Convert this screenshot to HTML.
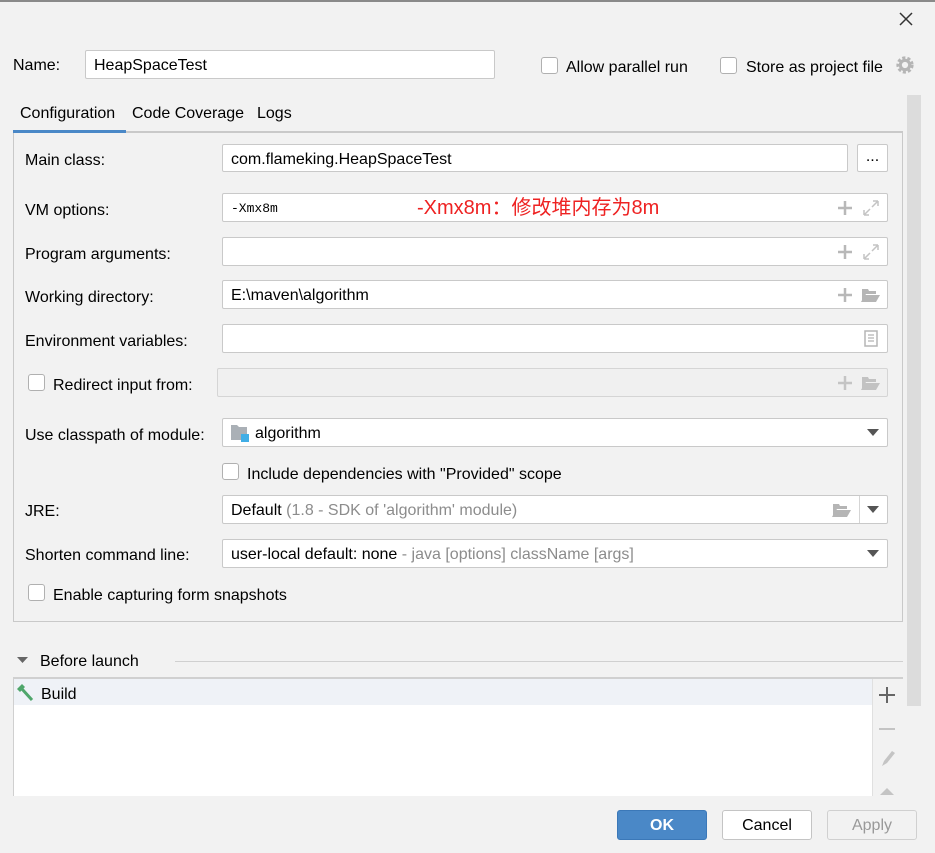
<!DOCTYPE html>
<html><head><meta charset="utf-8"><style>
*{box-sizing:border-box;margin:0;padding:0}
body{width:935px;height:853px;background:#f2f2f2;font-family:"Liberation Sans","Noto Sans CJK SC",sans-serif;font-size:16px;color:#000;position:relative;overflow:hidden}
.a{position:absolute}
.t{position:absolute;line-height:18px;white-space:nowrap;margin-top:2px}
.f{position:absolute;background:#fff;border:1px solid #c9c9c9;border-radius:2px}
.f .v{position:absolute;left:8px;top:6px;line-height:18px;white-space:nowrap}
.cb{position:absolute;width:17px;height:17px;background:#fff;border:1px solid #b0b0b0;border-radius:3px}
.g{color:#8c8c8c}
.btn{position:absolute;height:30px;width:90px;border:1px solid #c4c4c4;border-radius:3px;background:#fff;text-align:center;line-height:30px}
svg{position:absolute}
</style></head><body>
<div class="a" style="left:0;top:0;width:935px;height:2px;background:#8a8a8a"></div>
<svg style="left:899px;top:12px" width="14" height="14"><path d="M1 1L13 13M13 1L1 13" stroke="#333" stroke-width="1.5"/></svg>

<div class="t" style="left:13px;top:55px">Name:</div>
<div class="f" style="left:85px;top:50px;width:410px;height:29px"><span class="v">HeapSpaceTest</span></div>
<div class="cb" style="left:541px;top:57px"></div>
<div class="t" style="left:566px;top:57px">Allow parallel run</div>
<div class="cb" style="left:720px;top:57px"></div>
<div class="t" style="left:746px;top:57px">Store as project file</div>
<svg style="left:895px;top:55px" width="20" height="20" viewBox="0 0 18 18"><circle cx="9" cy="9" r="6" fill="none" stroke="#b5b5b5" stroke-width="3.5" stroke-dasharray="2.6 1.7"/><circle cx="9" cy="9" r="4.2" fill="none" stroke="#b5b5b5" stroke-width="2.8"/></svg>

<div class="t" style="left:20px;top:103px">Configuration</div>
<div class="t" style="left:132px;top:103px">Code Coverage</div>
<div class="t" style="left:257px;top:103px">Logs</div>
<div class="a" style="left:13px;top:131px;width:890px;height:2px;background:#c9c9c9"></div>
<div class="a" style="left:13px;top:130px;width:113px;height:3px;background:#4a88c7"></div>
<div class="a" style="left:13px;top:133px;width:890px;height:489px;border:1px solid #c9c9c9;border-top:none"></div>
<div class="a" style="left:907px;top:95px;width:14px;height:611px;background:#dcdcdc"></div>

<div class="t" style="left:25px;top:150px">Main class:</div>
<div class="f" style="left:222px;top:144px;width:626px;height:28px"><span class="v">com.flameking.HeapSpaceTest</span></div>
<div class="f" style="left:857px;top:144px;width:31px;height:28px;text-align:center;line-height:24px">...</div>

<div class="t" style="left:25px;top:200px">VM options:</div>
<div class="f" style="left:222px;top:193px;width:666px;height:29px"><span class="v" style="font-family:'Liberation Mono',monospace;font-size:13px">-Xmx8m</span>
<span class="a" style="left:194px;top:2px;color:#ee2222;font-size:20px;line-height:24px;white-space:nowrap">-Xmx8m：修改堆内存为8m</span></div>

<div class="t" style="left:25px;top:244px">Program arguments:</div>
<div class="f" style="left:222px;top:237px;width:666px;height:29px"></div>
<div class="t" style="left:25px;top:287px">Working directory:</div>
<div class="f" style="left:222px;top:280px;width:666px;height:29px"><span class="v">E:\maven\algorithm</span></div>
<div class="t" style="left:25px;top:331px">Environment variables:</div>
<div class="f" style="left:222px;top:324px;width:666px;height:29px"></div>

<div class="cb" style="left:28px;top:374px"></div>
<div class="t" style="left:53px;top:375px">Redirect input from:</div>
<div class="f" style="left:217px;top:368px;width:671px;height:29px;background:#f0f0f0;border-color:#d5d5d5"></div>

<svg style="left:836px;top:199px" width="46" height="18"><path d="M9 2V16M2 9H16" stroke="#b8b8b8" stroke-width="2.5"/><path d="M28 16L34 10M42 2L36 8M28 16V11M28 16H33M42 2V7M42 2H37" stroke="#c4c4c4" stroke-width="1.5" fill="none"/></svg>
<svg style="left:836px;top:243px" width="46" height="18"><path d="M9 2V16M2 9H16" stroke="#b8b8b8" stroke-width="2.5"/><path d="M28 16L34 10M42 2L36 8M28 16V11M28 16H33M42 2V7M42 2H37" stroke="#c4c4c4" stroke-width="1.5" fill="none"/></svg>
<svg style="left:836px;top:286px" width="46" height="18"><path d="M9 2V16M2 9H16" stroke="#b8b8b8" stroke-width="2.5"/><path d="M26 3H32L33 5H40V8H30L26 15Z" fill="#b5b5b5"/><path d="M29 9H44L40 16H25Z" fill="#b5b5b5"/></svg>
<svg style="left:836px;top:374px" width="46" height="18"><path d="M9 2V16M2 9H16" stroke="#c4c4c4" stroke-width="2.5"/><path d="M26 3H32L33 5H40V8H30L26 15Z" fill="#c2c2c2"/><path d="M29 9H44L40 16H25Z" fill="#c2c2c2"/></svg>
<svg style="left:864px;top:330px" width="14" height="17"><rect x="1" y="1" width="12" height="15" fill="none" stroke="#b5b5b5" stroke-width="1.5"/><path d="M4 5H10M4 8H10M4 11H10" stroke="#b5b5b5" stroke-width="1.2"/></svg>

<div class="t" style="left:25px;top:425px">Use classpath of module:</div>
<div class="f" style="left:222px;top:418px;width:666px;height:29px"><span class="v" style="left:32px">algorithm</span></div>
<svg style="left:231px;top:425px" width="20" height="18"><path d="M0 0H6L8 2H16V15H0Z" fill="#aab0b6"/><rect x="10" y="9" width="8" height="8" fill="#40aee6"/></svg>
<svg style="left:867px;top:429px" width="12" height="8"><path d="M0 0H12L6 7Z" fill="#555"/></svg>

<div class="cb" style="left:222px;top:463px"></div>
<div class="t" style="left:247px;top:464px">Include dependencies with "Provided" scope</div>

<div class="t" style="left:25px;top:501px">JRE:</div>
<div class="f" style="left:222px;top:495px;width:666px;height:29px"><span class="v">Default <span class="g">(1.8 - SDK of 'algorithm' module)</span></span></div>
<div class="a" style="left:859px;top:496px;width:1px;height:27px;background:#d5d5d5"></div>
<svg style="left:832px;top:501px" width="22" height="18"><path d="M1 3H7L8 5H15V8H5L1 15Z" fill="#b5b5b5"/><path d="M4 9H19L15 16H0Z" fill="#b5b5b5"/></svg>
<svg style="left:867px;top:506px" width="12" height="8"><path d="M0 0H12L6 7Z" fill="#555"/></svg>

<div class="t" style="left:25px;top:545px">Shorten command line:</div>
<div class="f" style="left:222px;top:539px;width:666px;height:29px"><span class="v">user-local default: none <span class="g">- java [options] className [args]</span></span></div>
<svg style="left:867px;top:550px" width="12" height="8"><path d="M0 0H12L6 7Z" fill="#555"/></svg>

<div class="cb" style="left:28px;top:584px"></div>
<div class="t" style="left:53px;top:585px">Enable capturing form snapshots</div>

<svg style="left:17px;top:657px" width="12" height="8"><path d="M0 0H11L5.5 6Z" fill="#666"/></svg>
<div class="t" style="left:40px;top:651px">Before launch</div>
<div class="a" style="left:175px;top:661px;width:728px;height:1px;background:#d0d0d0"></div>

<div class="a" style="left:13px;top:677px;width:890px;height:119px;background:#fff;border-top:2px solid #d0d0d0;border-left:1px solid #d0d0d0"></div>
<div class="a" style="left:14px;top:679px;width:858px;height:26px;background:#eff2f7"></div>
<div class="a" style="left:872px;top:679px;width:31px;height:117px;background:#f2f2f2;border-left:1px solid #e0e0e0"></div>
<svg style="left:15px;top:683px" width="22" height="18"><path d="M2 6L7 1L10 4L5 9Z" fill="#4fa66b"/><path d="M7 6L17 17" stroke="#4fa66b" stroke-width="3"/></svg>
<div class="t" style="left:41px;top:684px">Build</div>
<svg style="left:878px;top:686px" width="18" height="18"><path d="M9 1V17M1 9H17" stroke="#666" stroke-width="2"/></svg>
<svg style="left:878px;top:720px" width="18" height="18"><path d="M1 9H17" stroke="#c4c4c4" stroke-width="2"/></svg>
<svg style="left:878px;top:749px" width="18" height="20"><path d="M4 17L6 12L14 2L17 4L9 14Z" fill="#c4c4c4"/></svg>
<svg style="left:880px;top:787px" width="14" height="9"><path d="M0 8H14L7 1Z" fill="#c4c4c4"/></svg>
<div class="a" style="left:0;top:796px;width:935px;height:57px;background:#f2f2f2"></div>

<div class="btn" style="left:617px;top:810px;background:#4a88c7;border-color:#3b78b8;color:#fff;font-weight:bold">OK</div>
<div class="btn" style="left:722px;top:810px">Cancel</div>
<div class="btn" style="left:827px;top:810px;background:#f2f2f2;border-color:#d0d0d0;color:#999">Apply</div>
</body></html>
